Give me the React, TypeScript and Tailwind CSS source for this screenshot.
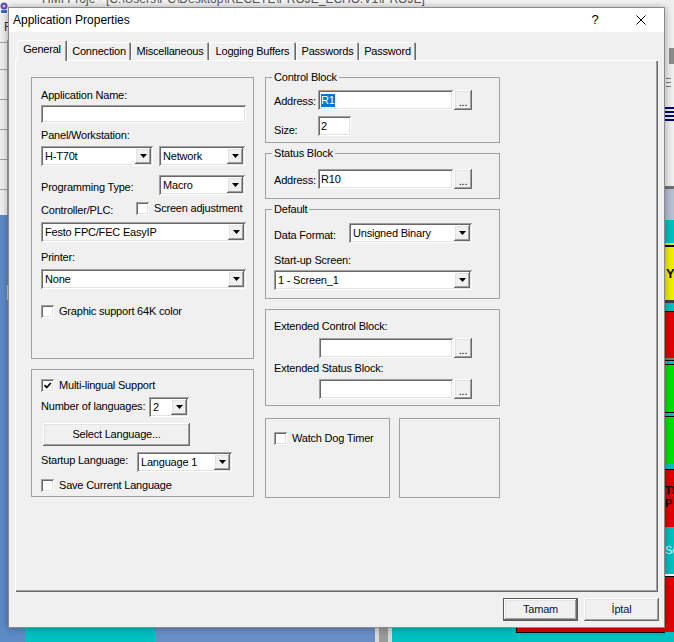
import React from 'react';

// ─────────────────────────────────────────────────────────────────────────────
// Estilos clásicos de Windows (bordes 3D)
// ─────────────────────────────────────────────────────────────────────────────

const SUNKEN = 'shadow-[inset_1px_1px_#a0a0a0,inset_-1px_-1px_#ffffff,inset_2px_2px_#696969,inset_-2px_-2px_#e3e3e3]';
const RAISED = 'shadow-[inset_-1px_-1px_#696969,inset_1px_1px_#ffffff,inset_-2px_-2px_#a0a0a0,inset_2px_2px_#e3e3e3]';
const PANEL  = 'shadow-[inset_1px_1px_#ffffff,inset_-1px_-1px_#696969,inset_-2px_-2px_#a0a0a0]';
const TAB    = 'shadow-[inset_1px_1px_#ffffff,inset_-1px_0_#696969,inset_-2px_0_#a0a0a0]';

// ─────────────────────────────────────────────────────────────────────────────
// Controles
// ─────────────────────────────────────────────────────────────────────────────

const ArrowDown = () => (
  <svg width="7" height="4" viewBox="0 0 7 4">
    <path d="M0 0h7L3.5 4z" fill="#000" />
  </svg>
);

function Combo({ value, className = '' }: { value: string; className?: string }) {
  return (
    <div className={`flex h-[20px] items-center bg-white p-[2px] ${SUNKEN} ${className}`}>
      <span className="flex-1 truncate pl-[2px] leading-[13px]">{value}</span>
      <span className={`flex h-[16px] w-[16px] items-center justify-center bg-[#f0f0f0] ${RAISED}`}>
        <ArrowDown />
      </span>
    </div>
  );
}

function TextBox({ children, className = '' }: { children?: React.ReactNode; className?: string }) {
  return (
    <div className={`flex items-center bg-white pl-[3px] leading-[13px] ${SUNKEN} ${className}`}>
      {children}
    </div>
  );
}

const DotsButton = () => (
  <div className={`ml-[1px] flex h-[20px] w-[18px] items-end justify-center bg-[#f0f0f0] pb-[4px] leading-[8px] ${RAISED}`}>
    ...
  </div>
);

function CheckBox({ label, checked = false, className = '' }: { label: string; checked?: boolean; className?: string }) {
  return (
    <div className={`flex items-center gap-[5px] ${className}`}>
      <span className={`flex h-[13px] w-[13px] items-center justify-center bg-white ${SUNKEN}`}>
        {checked && (
          <svg width="9" height="9" viewBox="0 0 9 9">
            <path d="M1.5 4.2l2.2 2.3L7.8 2" stroke="#000" strokeWidth="1.7" fill="none" />
          </svg>
        )}
      </span>
      <span className="leading-[13px]">{label}</span>
    </div>
  );
}

// ─────────────────────────────────────────────────────────────────────────────
// Fondo (aplicación detrás del diálogo)
// ─────────────────────────────────────────────────────────────────────────────

function LeftStrip() {
  return (
    <div className="flex w-[8px] flex-col">
      <div className="h-[15px] bg-[#f7f7f7]">
        <svg width="8" height="15" viewBox="0 0 8 15">
          <circle cx="4" cy="6" r="3.5" fill="#5b4fa6" />
          <circle cx="4" cy="6" r="1.5" fill="#c9c4ec" />
          <rect x="1" y="10" width="6" height="3" fill="#3d6fb8" />
        </svg>
      </div>
      <div className="h-[25px] overflow-hidden bg-[#f0f0f0] pl-[4px] text-[12px] leading-[25px] text-[#333]">F</div>
      <div className="flex h-[175px] flex-col border-r border-[#a0a0a0] bg-[#f0f0f0]">
        <div className="h-[3px] border-b border-[#a0a0a0]" />
        <div className="h-[27px] border-b border-[#a0a0a0]" />
        <div className="h-[30px] border-b border-[#a0a0a0]" />
        <div className="h-[30px] border-b border-[#a0a0a0]" />
        <div className="h-[30px] border-b border-[#a0a0a0]" />
        <div className="h-[30px] border-b border-[#a0a0a0]" />
      </div>
      <div className="flex flex-1 flex-col bg-[#5d8bc7]">
        <div className="ml-auto mt-[70px] h-[15px] w-[1px] bg-[#c8c8c8]" />
      </div>
    </div>
  );
}

function RightStrip() {
  return (
    <div className="flex w-[9px] flex-col bg-[#f0f0f0]">
      <div className="h-[48px]" />
      <div className="ml-[4px] h-[16px] bg-[#8c8c8c]" />
      <div className="flex h-[43px] flex-col gap-[3px] pl-[1px] pt-[14px]">
        <div className="h-[1px] w-[5px] bg-[#7a7a7a]" />
        <div className="h-[1px] w-[5px] bg-[#7a7a7a]" />
        <div className="h-[1px] w-[5px] bg-[#7a7a7a]" />
      </div>
      <div className="flex h-[16px] flex-col gap-[2px]">
        <div className="h-[2px] bg-[#000080]" />
        <div className="h-[2px] bg-[#000080]" />
        <div className="h-[2px] bg-[#000080]" />
        <div className="h-[2px] bg-[#000080]" />
      </div>
      <div className="h-[63px]" />
      <div className="h-[3px] bg-[#707070]" />
      <div className="h-[31px] bg-[#b6c1d4]" />
      <div className="h-[23px] bg-[#00c0c0]" />
      <div className="h-[2px] bg-[#e8e800]" />
      <div className="h-[2px] bg-black" />
      <div className="flex h-[53px] items-center bg-[#f0f000] pl-[1px] text-[13px] font-bold leading-none">Y</div>
      <div className="h-[3px] bg-[#404040]" />
      <div className="h-[9px] border-b border-black bg-[#00c0c0]" />
      <div className="h-[46px] bg-[#e00000]" />
      <div className="h-[2px] bg-[#808080]" />
      <div className="h-[5px] border-y border-black bg-[#00c0c0]" />
      <div className="h-[47px] bg-[#00e000]" />
      <div className="h-[5px] border-y border-black bg-[#00c0c0]" />
      <div className="h-[46px] bg-[#00e000]" />
      <div className="h-[7px] border-b border-black bg-[#00c0c0]" />
      <div className="flex h-[57px] flex-col gap-[2px] bg-[#e00000] pt-[15px] text-[11px] font-bold leading-[11px]">
        <span>TI</span>
        <span>P</span>
      </div>
      <div className="flex h-[47px] items-center bg-[#00c0c0] text-[11px] leading-none text-[#d8ffff]">Se</div>
      <div className="h-[3px] border-b border-black bg-white" />
      <div className="h-[55px] bg-[#e00000]" />
      <div className="flex-1 bg-[#00c0c0]" />
    </div>
  );
}

function BottomStrip() {
  return (
    <div className="flex h-[14px]">
      <div className="w-[17px] bg-[#5d8bc7]" />
      <div className="w-[130px] bg-[#00c0c0]" />
      <div className="w-[220px] bg-[#6a8fc6]" />
      <div className="w-[17px] border-x-4 border-[#d8d8d8] bg-[#9a9a9a]" />
      <div className="w-[124px] bg-[#00c0c0]" />
      <div className="flex w-[149px] flex-col bg-[#00c0c0]">
        <div className="h-[5px] border-b border-l border-black bg-[#e00000]" />
      </div>
    </div>
  );
}

// ─────────────────────────────────────────────────────────────────────────────
// Diálogo
// ─────────────────────────────────────────────────────────────────────────────

function Dialog() {
  return (
    <div className="absolute left-[8px] top-[7px] flex h-[621px] w-[657px] flex-col border border-[#8a8a8a] bg-[#f0f0f0] text-[11px] tracking-[-0.2px] text-black shadow-[0_0_8px_rgba(0,0,0,0.35)]">

      {/* ── Barra de título ─────────────────────────────────────────────── */}
      <div className="flex h-[24px] items-center bg-white">
        <span className="pl-[4px] text-[12px] tracking-normal">Application Properties</span>
        <span className="ml-auto w-[46px] text-center text-[13px] tracking-normal">?</span>
        <span className="flex w-[46px] justify-center">
          <svg width="10" height="10" viewBox="0 0 10 10">
            <path d="M0.5 0.5l9 9M9.5 0.5l-9 9" stroke="#000" strokeWidth="1" />
          </svg>
        </span>
      </div>

      <div className="flex flex-1 flex-col px-[6px] pt-[8px]">

        {/* ── Pestañas ──────────────────────────────────────────────────── */}
        <div className="flex h-[20px] items-end pl-[2px]">
          <div className={`relative z-10 -mb-[1px] flex h-[21px] w-[50px] justify-center rounded-t-[2px] bg-[#f0f0f0] pt-[3px] leading-[13px] ${TAB}`}>
            General
          </div>
          <div className={`flex h-[18px] w-[64px] items-center justify-center rounded-t-[2px] leading-[13px] ${TAB}`}>Connection</div>
          <div className={`flex h-[18px] w-[78px] items-center justify-center rounded-t-[2px] leading-[13px] ${TAB}`}>Miscellaneous</div>
          <div className={`flex h-[18px] w-[87px] items-center justify-center rounded-t-[2px] leading-[13px] ${TAB}`}>Logging Buffers</div>
          <div className={`flex h-[18px] w-[63px] items-center justify-center rounded-t-[2px] leading-[13px] ${TAB}`}>Passwords</div>
          <div className={`flex h-[18px] w-[57px] items-center justify-center rounded-t-[2px] leading-[13px] ${TAB}`}>Password</div>
        </div>

        {/* ── Panel General ─────────────────────────────────────────────── */}
        <div className={`flex h-[532px] gap-[11px] pl-[16px] pt-[11px] ${PANEL}`}>

          {/* Columna izquierda */}
          <div className="flex w-[223px] flex-col pt-[6px]">
            <div className="flex h-[282px] flex-col border border-[#a0a0a0] pl-[9px] pr-[7px] pt-[11px]">
              <span className="leading-[13px]">Application Name:</span>
              <TextBox className="mt-[3px] h-[18px] w-full" />
              <span className="mt-[6px] leading-[13px]">Panel/Workstation:</span>
              <div className="mt-[4px] flex gap-[6px]">
                <Combo value="H-T70t" className="w-[112px]" />
                <Combo value="Network" className="w-[86px]" />
              </div>
              <div className="mt-[9px] flex items-start">
                <span className="w-[118px] pt-[6px] leading-[13px]">Programming Type:</span>
                <Combo value="Macro" className="w-[86px]" />
              </div>
              <div className="mt-[6px] flex items-start">
                <span className="w-[95px] pt-[3px] leading-[13px]">Controller/PLC:</span>
                <CheckBox label="Screen adjustment" className="mt-[1px]" />
              </div>
              <Combo value="Festo FPC/FEC EasyIP" className="mt-[5px] w-full" />
              <span className="mt-[9px] leading-[13px]">Printer:</span>
              <Combo value="None" className="mt-[5px] w-full" />
              <CheckBox label="Graphic support 64K color" className="mt-[16px]" />
            </div>

            <div className="mt-[10px] flex h-[128px] flex-col border border-[#a0a0a0] pl-[9px] pt-[9px]">
              <CheckBox checked label="Multi-lingual Support" />
              <div className="mt-[5px] flex items-start">
                <span className="w-[108px] pt-[3px] leading-[13px]">Number of languages:</span>
                <Combo value="2" className="w-[40px]" />
              </div>
              <button className={`ml-[2px] mt-[6px] flex h-[23px] w-[147px] items-center justify-center bg-[#f0f0f0] leading-[13px] ${RAISED}`}>
                Select Language...
              </button>
              <div className="mt-[6px] flex items-start">
                <span className="w-[96px] pt-[2px] leading-[13px]">Startup Language:</span>
                <Combo value="Language 1" className="w-[95px]" />
              </div>
              <CheckBox label="Save Current Language" className="mt-[7px]" />
            </div>
          </div>

          {/* Columna derecha */}
          <div className="flex w-[235px] flex-col">
            <fieldset className="border border-[#a0a0a0]">
              <legend className="ml-[6px] px-[2px] leading-[13px]">Control Block</legend>
              <div className="flex flex-col pb-[5px] pl-[8px] pt-[6px]">
                <div className="flex items-start">
                  <span className="w-[44px] pt-[5px] leading-[13px]">Address:</span>
                  <TextBox className="h-[20px] w-[135px]">
                    <span className="bg-[#0078d7] text-white">R1</span>
                  </TextBox>
                  <DotsButton />
                </div>
                <div className="mt-[6px] flex items-start">
                  <span className="w-[44px] pt-[8px] leading-[13px]">Size:</span>
                  <TextBox className="h-[20px] w-[33px]">2</TextBox>
                </div>
              </div>
            </fieldset>

            <fieldset className="mt-[4px] border border-[#a0a0a0]">
              <legend className="ml-[6px] px-[2px] leading-[13px]">Status Block</legend>
              <div className="flex items-start pb-[9px] pl-[8px] pt-[9px]">
                <span className="w-[44px] pt-[5px] leading-[13px]">Address:</span>
                <TextBox className="h-[20px] w-[135px]">R10</TextBox>
                <DotsButton />
              </div>
            </fieldset>

            <fieldset className="mt-[4px] border border-[#a0a0a0]">
              <legend className="ml-[6px] px-[2px] leading-[13px]">Default</legend>
              <div className="flex flex-col pb-[8px] pl-[8px] pt-[7px]">
                <div className="flex items-start">
                  <span className="w-[75px] pt-[6px] leading-[13px]">Data Format:</span>
                  <Combo value="Unsigned Binary" className="w-[123px]" />
                </div>
                <span className="mt-[11px] leading-[13px]">Start-up Screen:</span>
                <Combo value="1 - Screen_1" className="mt-[3px] w-[198px]" />
              </div>
            </fieldset>

            <div className="mt-[10px] flex flex-col border border-[#a0a0a0] pb-[6px] pl-[8px] pt-[10px]">
              <span className="leading-[13px]">Extended Control Block:</span>
              <div className="mt-[5px] flex pl-[45px]">
                <TextBox className="h-[20px] w-[134px]" />
                <DotsButton />
              </div>
              <span className="mt-[4px] leading-[13px]">Extended Status Block:</span>
              <div className="mt-[4px] flex pl-[45px]">
                <TextBox className="h-[20px] w-[134px]" />
                <DotsButton />
              </div>
            </div>

            <div className="mt-[12px] flex gap-[9px]">
              <div className="h-[80px] w-[125px] border border-[#a0a0a0] pl-[8px] pt-[13px]">
                <CheckBox label="Watch Dog Timer" />
              </div>
              <div className="h-[80px] w-[101px] border border-[#a0a0a0]" />
            </div>
          </div>
        </div>

        {/* ── Botones ───────────────────────────────────────────────────── */}
        <div className="-mr-[1px] mt-[6px] flex justify-end gap-[6px]">
          <button className="h-[23px] w-[75px] border border-[#5a5a5a] bg-[#f0f0f0]">
            <span className={`flex h-full w-full items-center justify-center leading-[13px] text-[#10103a] ${RAISED}`}>Tamam</span>
          </button>
          <button className={`flex h-[23px] w-[75px] items-center justify-center bg-[#f0f0f0] leading-[13px] text-[#10103a] ${RAISED}`}>
            İptal
          </button>
        </div>
      </div>
    </div>
  );
}

// ─────────────────────────────────────────────────────────────────────────────
// Página
// ─────────────────────────────────────────────────────────────────────────────

export default function App() {
  return (
    <div className="relative h-[642px] w-[674px] overflow-hidden bg-[#f0f0f0] font-['Liberation_Sans',Arial,sans-serif]">
      <div className="flex h-full">
        <LeftStrip />
        <div className="flex flex-1 flex-col">
          <div className="h-[7px] overflow-hidden bg-[#f7f7f7]">
            <p className="-mt-[8px] whitespace-nowrap pl-[34px] text-[12px] leading-[14px] text-[#555]">
              HMI Proje - [C:\Users\PC\Desktop\RECETE\PROJE_ECHO.V1\PROJE]
            </p>
          </div>
          <div className="flex-1" />
          <BottomStrip />
        </div>
        <RightStrip />
      </div>
      <Dialog />
    </div>
  );
}
